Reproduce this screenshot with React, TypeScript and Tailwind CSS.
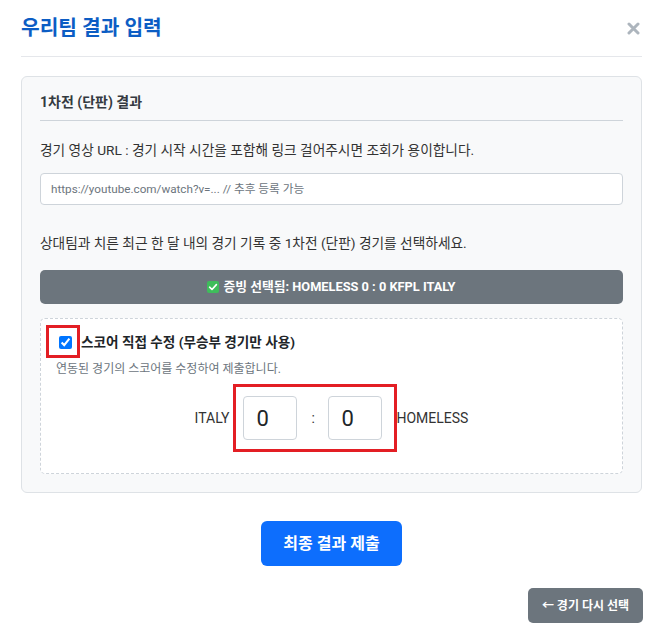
import React from "react";

const font = { fontFamily: '"Roboto", "Noto Sans CJK KR", sans-serif' };

function CheckEmoji() {
  return (
    <svg width="12" height="12" viewBox="0 0 12 12" className="shrink-0">
      <rect x="0" y="0" width="12" height="12" rx="2" fill="#3ebd5b" />
      <path d="M2.6 6.2 L5 8.5 L9.4 3.6" fill="none" stroke="#fff" strokeWidth="1.6" strokeLinecap="round" strokeLinejoin="round" />
    </svg>
  );
}

export default function App() {
  return (
    <div className="w-[663px] bg-white px-[21px] pb-[15px] text-[#212529]" style={font}>
      {/* header */}
      <div className="flex items-center justify-between border-b border-[#e5e7eb] pt-[16px] pb-[16px]">
        <h1 className="text-[20.3px] leading-[24px] font-bold text-[#0c5dc4]">우리팀 결과 입력</h1>
        <button className="mr-[2px] flex h-[14px] w-[14px] items-center justify-center">
          <svg width="13" height="13" viewBox="0 0 13 13">
            <path d="M2 2 L11 11 M11 2 L2 11" stroke="#adb5bd" strokeWidth="3" strokeLinecap="round" />
          </svg>
        </button>
      </div>

      {/* result card */}
      <div className="mt-[19px] rounded-[6px] border border-[#dee2e6] bg-[#f8f9fa] px-[18px] pt-[15px] pb-[18px]">
        <h2 className="border-b border-[#ced4da] pb-[8px] text-[14px] leading-[20px] font-bold text-[#343a40]">
          1차전 (단판) 결과
        </h2>

        <p className="mt-[19px] text-[13.7px] leading-[20px] text-[#333]">
          경기 영상 URL : 경기 시작 시간을 포함해 링크 걸어주시면 조회가 용이합니다.
        </p>
        <input
          type="text"
          placeholder="https://youtube.com/watch?v=... // 추후 등록 가능"
          className="mt-[13px] block h-[32px] w-full rounded-[4px] border border-[#ced4da] bg-white px-[10px] text-[11.7px] text-[#212529] placeholder:text-[#6c757d] outline-none"
        />

        <p className="mt-[28px] text-[13.7px] leading-[20px] text-[#333]">
          상대팀과 치른 최근 한 달 내의 경기 기록 중 1차전 (단판) 경기를 선택하세요.
        </p>

        <div className="mt-[17px] flex h-[34px] items-center justify-center gap-[4px] rounded-[5px] bg-[#6c757d] text-[12.8px] font-bold text-white">
          <CheckEmoji />
          <span>증빙 선택됨: HOMELESS 0 : 0 KFPL ITALY</span>
        </div>

        {/* manual score edit */}
        <div className="mt-[14px] h-[156px] rounded-[5px] border border-dashed border-[#ced4da] bg-white px-[15px] pt-[13px]">
          <label className="flex h-[20px] items-center">
            <span className="relative ml-[3px] flex h-[13px] w-[13px]">
              <input type="checkbox" defaultChecked className="m-0 h-[13px] w-[13px] accent-[#0075ff]" />
              <span className="pointer-events-none absolute top-[-11px] bottom-[-9px] left-[-13px] right-[-8px] border-[3px] border-[#e31e24]" />
            </span>
            <span className="ml-[9px] text-[13.6px] leading-[20px] font-bold text-[#212529]">
              스코어 직접 수정 (무승부 경기만 사용)
            </span>
          </label>
          <p className="mt-[8px] text-[12px] leading-[18px] text-[#6c757d]">연동된 경기의 스코어를 수정하여 제출합니다.</p>

          <div className="mt-[18px] flex items-center justify-center gap-[14px] text-[14px] text-[#333]">
            <span>ITALY</span>
            <span className="relative flex items-center gap-[14px]">
              <input
                type="text"
                defaultValue="0"
                className="h-[44px] w-[54px] rounded-[4px] border border-[#ced4da] bg-white px-[12px] text-left text-[22px] text-[#212529] outline-none"
              />
              <span className="w-[3px] text-center">:</span>
              <input
                type="text"
                defaultValue="0"
                className="h-[44px] w-[54px] rounded-[4px] border border-[#ced4da] bg-white px-[12px] text-left text-[22px] text-[#212529] outline-none"
              />
              <span className="pointer-events-none absolute top-[-12px] bottom-[-12px] left-[-10px] right-[-15px] border-[3px] border-[#e31e24]" />
            </span>
            <span>HOMELESS</span>
          </div>
        </div>
      </div>

      <div className="mt-[28px] flex justify-center">
        <button className="h-[45px] w-[141px] rounded-[6px] bg-[#0d6efd] text-[16px] font-bold text-white">
          최종 결과 제출
        </button>
      </div>

      <div className="mt-[22px] flex justify-end">
        <button className="mr-[-1px] h-[35px] w-[115px] rounded-[5px] bg-[#6c757d] text-[12px] font-bold text-white">
          ← 경기 다시 선택
        </button>
      </div>
    </div>
  );
}
